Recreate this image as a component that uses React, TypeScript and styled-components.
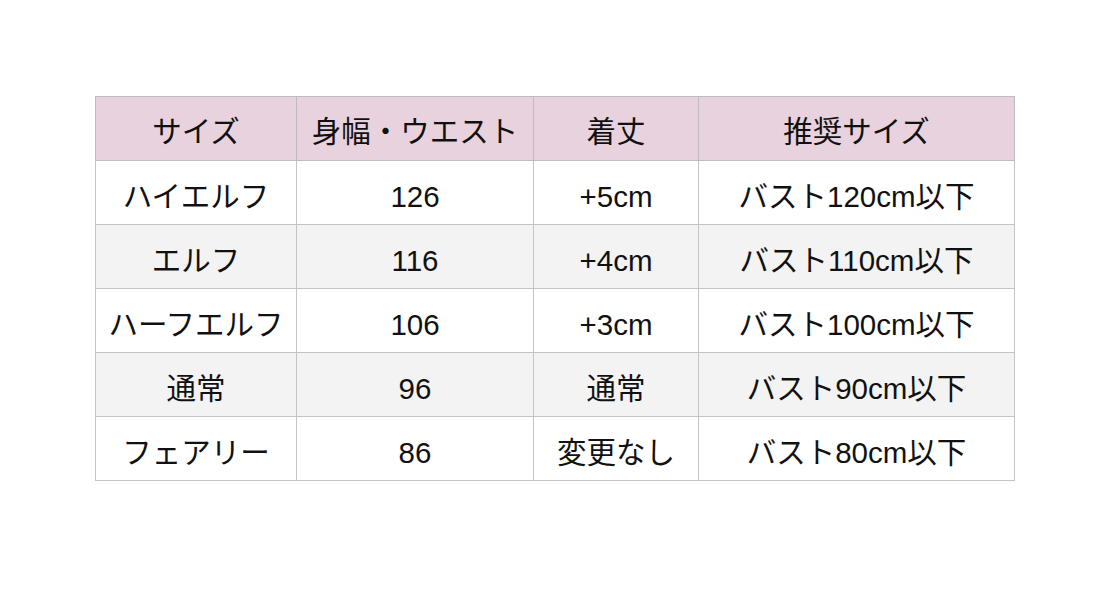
import styled, { createGlobalStyle } from "styled-components";

const GlobalStyle = createGlobalStyle`
  html, body {
    margin: 0;
    padding: 0;
    background: #ffffff;
  }
  body {
    font-family: "Noto Sans CJK JP", "Liberation Sans", sans-serif;
    color: #111111;
  }
`;

const Page = styled.div`
  width: 1110px;
  height: 598px;
  padding: 96px 0 0 95px;
  box-sizing: border-box;
`;

const Table = styled.table`
  border-collapse: collapse;
  table-layout: fixed;
  width: 919px;
  font-size: 29.5px;
  line-height: 1;
`;

const HeadCell = styled.th`
  background: #e8d2de;
  font-weight: 400;
  height: 64px;
  border: 1px solid #c0bcbe;
  text-align: center;
  padding: 3px 0 0;
  box-sizing: border-box;
`;

const Row = styled.tr<{ $shaded: boolean }>`
  background: ${(p) => (p.$shaded ? "#f3f3f3" : "#ffffff")};
`;

const Cell = styled.td`
  height: 64px;
  border: 1px solid #c4c4c4;
  text-align: center;
  padding: 9px 0 0;
  box-sizing: border-box;
  font-family: "Liberation Sans", "Noto Sans CJK JP", sans-serif;
`;

const widths = [201, 237, 165, 316];
const headers = ["サイズ", "身幅・ウエスト", "着丈", "推奨サイズ"];

const rows = [
  ["ハイエルフ", "126", "+5cm", "バスト120cm以下"],
  ["エルフ", "116", "+4cm", "バスト110cm以下"],
  ["ハーフエルフ", "106", "+3cm", "バスト100cm以下"],
  ["通常", "96", "通常", "バスト90cm以下"],
  ["フェアリー", "86", "変更なし", "バスト80cm以下"],
];

export default function App() {
  return (
    <>
      <GlobalStyle />
      <Page>
        <Table>
          <colgroup>
            {widths.map((w, i) => (
              <col key={i} style={{ width: w }} />
            ))}
          </colgroup>
          <thead>
            <tr>
              {headers.map((h) => (
                <HeadCell key={h}>{h}</HeadCell>
              ))}
            </tr>
          </thead>
          <tbody>
            {rows.map((r, i) => (
              <Row key={i} $shaded={i % 2 === 1}>
                {r.map((c, j) => (
                  <Cell key={j}>{c}</Cell>
                ))}
              </Row>
            ))}
          </tbody>
        </Table>
      </Page>
    </>
  );
}
